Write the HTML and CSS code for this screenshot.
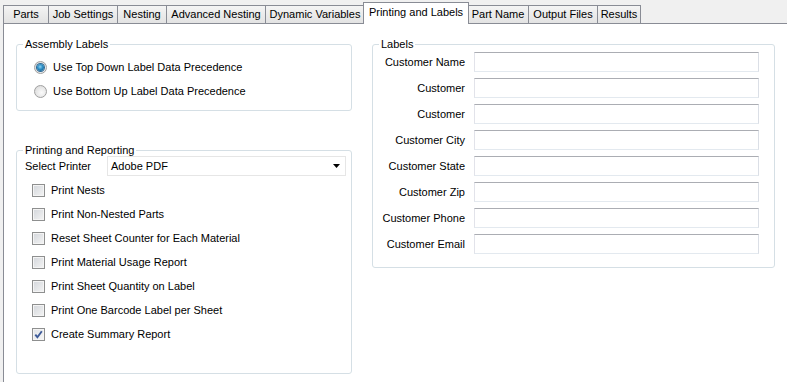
FILE: index.html
```html
<!DOCTYPE html>
<html lang="en">
<head>
    <meta charset="UTF-8">
    <meta name="viewport" content="width=device-width, initial-scale=1.0">
    <title>Printing and Labels</title>
    <link rel="stylesheet" href="styles.css">
</head>
<body>
    <div class="window">
        <!-- Tab strip -->
        <div class="tabs">
            <div class="tab tab-parts">Parts</div>
            <div class="tab tab-job">Job Settings</div>
            <div class="tab tab-nesting">Nesting</div>
            <div class="tab tab-advanced">Advanced Nesting</div>
            <div class="tab tab-dynamic">Dynamic Variables</div>
            <div class="tab tab-printing active">Printing and Labels</div>
            <div class="tab tab-partname">Part Name</div>
            <div class="tab tab-output">Output Files</div>
            <div class="tab tab-results">Results</div>
        </div>

        <div class="page">
            <div class="left-col">
                <!-- Assembly Labels -->
                <fieldset class="group group-assembly">
                    <legend>Assembly Labels</legend>
                    <div class="options">
                        <div class="option radio-option">
                            <span class="radio checked"><span class="dot"></span></span>
                            <span>Use Top Down Label Data Precedence</span>
                        </div>
                        <div class="option radio-option">
                            <span class="radio"></span>
                            <span>Use Bottom Up Label Data Precedence</span>
                        </div>
                    </div>
                </fieldset>

                <!-- Printing and Reporting -->
                <fieldset class="group group-printing">
                    <legend>Printing and Reporting</legend>
                    <div class="printer-row">
                        <span class="printer-label">Select Printer</span>
                        <div class="dropdown">
                            <span>Adobe PDF</span>
                            <svg class="arrow" width="7" height="4" viewBox="0 0 7 4"><path d="M0 0h7L3.5 4z" fill="#000"/></svg>
                        </div>
                    </div>
                    <div class="options checks">
                        <div class="option check-option"><span class="checkbox"></span><span>Print Nests</span></div>
                        <div class="option check-option"><span class="checkbox"></span><span>Print Non-Nested Parts</span></div>
                        <div class="option check-option"><span class="checkbox"></span><span>Reset Sheet Counter for Each Material</span></div>
                        <div class="option check-option"><span class="checkbox"></span><span>Print Material Usage Report</span></div>
                        <div class="option check-option"><span class="checkbox"></span><span>Print Sheet Quantity on Label</span></div>
                        <div class="option check-option"><span class="checkbox"></span><span>Print One Barcode Label per Sheet</span></div>
                        <div class="option check-option">
                            <span class="checkbox checked">
                                <svg width="9" height="9" viewBox="0 0 9 9"><path d="M1.3 4.6L3.4 7.2L7.8 1.2" fill="none" stroke="#3d5a98" stroke-width="1.9"/></svg>
                            </span>
                            <span>Create Summary Report</span>
                        </div>
                    </div>
                </fieldset>
            </div>

            <!-- Labels -->
            <fieldset class="group group-labels">
                <legend>Labels</legend>
                <div class="fields">
                    <div class="field"><label>Customer Name</label><input type="text"></div>
                    <div class="field"><label>Customer</label><input type="text"></div>
                    <div class="field"><label>Customer</label><input type="text"></div>
                    <div class="field"><label>Customer City</label><input type="text"></div>
                    <div class="field"><label>Customer State</label><input type="text"></div>
                    <div class="field"><label>Customer Zip</label><input type="text"></div>
                    <div class="field"><label>Customer Phone</label><input type="text"></div>
                    <div class="field"><label>Customer Email</label><input type="text"></div>
                </div>
            </fieldset>
        </div>
    </div>
</body>
</html>
```

FILE: styles.css
```css
body {
    margin: 0;
    font-family: "Liberation Sans", Arial, sans-serif;
    font-size: 11px;
    color: #000;
    background-color: #f0f0f0;
}

.window {
    width: 787px;
    height: 382px;
    overflow: hidden;
}

/* Tabs */
.tabs {
    display: flex;
    align-items: flex-end;
    height: 23px;
    padding-left: 3px;
}

.tab {
    box-sizing: border-box;
    height: 18px;
    line-height: 17px;
    margin-left: -1px;
    text-align: center;
    white-space: nowrap;
    border: 1px solid #898c95;
    border-bottom: none;
    background: linear-gradient(#f4f4f4, #ebebeb 50%, #e3e3e3);
}

.tab:first-child {
    margin-left: 0;
}

.tab.active {
    position: relative;
    z-index: 1;
    height: 22px;
    line-height: 19px;
    margin-left: -2px;
    margin-bottom: -1px;
    background: #fff;
}

.tab.active + .tab {
    margin-left: -2px;
}

.tab-parts { width: 46px; }
.tab-job { width: 70px; }
.tab-nesting { width: 50px; }
.tab-advanced { width: 100px; }
.tab-dynamic { width: 100px; }
.tab-printing { width: 106px; }
.tab-partname { width: 62px; }
.tab-output { width: 70px; }
.tab-results { width: 44px; }

/* Page */
.page {
    box-sizing: border-box;
    height: 359px;
    display: flex;
    gap: 20px;
    margin-left: 3px;
    padding: 13px 0 0 12px;
    background-color: #fff;
    border-top: 1px solid #898c95;
    border-left: 1px solid #898c95;
}

.left-col {
    display: flex;
    flex-direction: column;
    gap: 32px;
}

.group {
    box-sizing: border-box;
    margin: 0;
    min-width: 0;
    padding: 0 5px 0 6px;
    border: 1px solid #d5dfe5;
    border-radius: 3px;
}

.group legend {
    padding: 0 2px;
    line-height: 14px;
}

.group-assembly {
    width: 336px;
    padding-top: 4px;
    padding-bottom: 7px;
}

.group-printing {
    width: 336px;
    padding-bottom: 27px;
}

.group-labels {
    width: 403px;
    align-self: flex-start;
    padding-top: 1px;
    padding-bottom: 13px;
    padding-right: 15px;
}

/* Options */
.option {
    display: flex;
    align-items: center;
    height: 24px;
}

.radio-option {
    padding-left: 11px;
    gap: 6px;
}

.check-option {
    padding-left: 9px;
    gap: 6px;
}

.radio {
    box-sizing: border-box;
    width: 13px;
    height: 13px;
    display: flex;
    align-items: center;
    justify-content: center;
    border: 1px solid #a0a0a0;
    border-radius: 50%;
    background: radial-gradient(circle at 60% 60%, #fbfbfb 0%, #e6e6e6 55%, #d4d4d4 100%);
}

.radio .dot {
    width: 7px;
    height: 7px;
    border-radius: 50%;
    background: radial-gradient(circle at 45% 40%, #8fd3f2 0%, #2a8cc4 45%, #0f4d7c 100%);
    box-shadow: 0 0 0 1px #2e6a94;
}

.checkbox {
    box-sizing: border-box;
    width: 13px;
    height: 13px;
    display: flex;
    align-items: center;
    justify-content: center;
    border: 1px solid #8e8f8f;
    box-shadow: inset 0 0 0 1px #f4f4f4;
    background: linear-gradient(135deg, #d3d6db, #f4f4f4);
}

.checkbox.checked {
    background: linear-gradient(135deg, #dfe2e6, #f7f7f7);
}

.checkbox svg {
    display: block;
}

/* Printer select */
.printer-row {
    display: flex;
    align-items: center;
    height: 20px;
    margin-top: -1px;
    margin-bottom: 2px;
}

.printer-label {
    width: 82px;
    padding-left: 2px;
}

.dropdown {
    box-sizing: border-box;
    width: 239px;
    height: 20px;
    display: flex;
    align-items: center;
    justify-content: space-between;
    padding: 0 5px 0 3px;
    border: 1px solid #e6e6e6;
    background-color: #fff;
}

.arrow {
    display: block;
}

/* Labels fields */
.fields {
    display: flex;
    flex-direction: column;
    gap: 6px;
}

.field {
    display: flex;
    align-items: center;
    gap: 9px;
    height: 20px;
}

.field label {
    width: 86px;
    text-align: right;
    white-space: nowrap;
}

.field input {
    box-sizing: border-box;
    width: 285px;
    height: 20px;
    margin: 0;
    padding: 0 3px;
    font: inherit;
    background-color: #fff;
    border: 1px solid;
    border-color: #abadb3 #dbdfe6 #e3e9ef #e2e3ea;
    outline: none;
}
```
